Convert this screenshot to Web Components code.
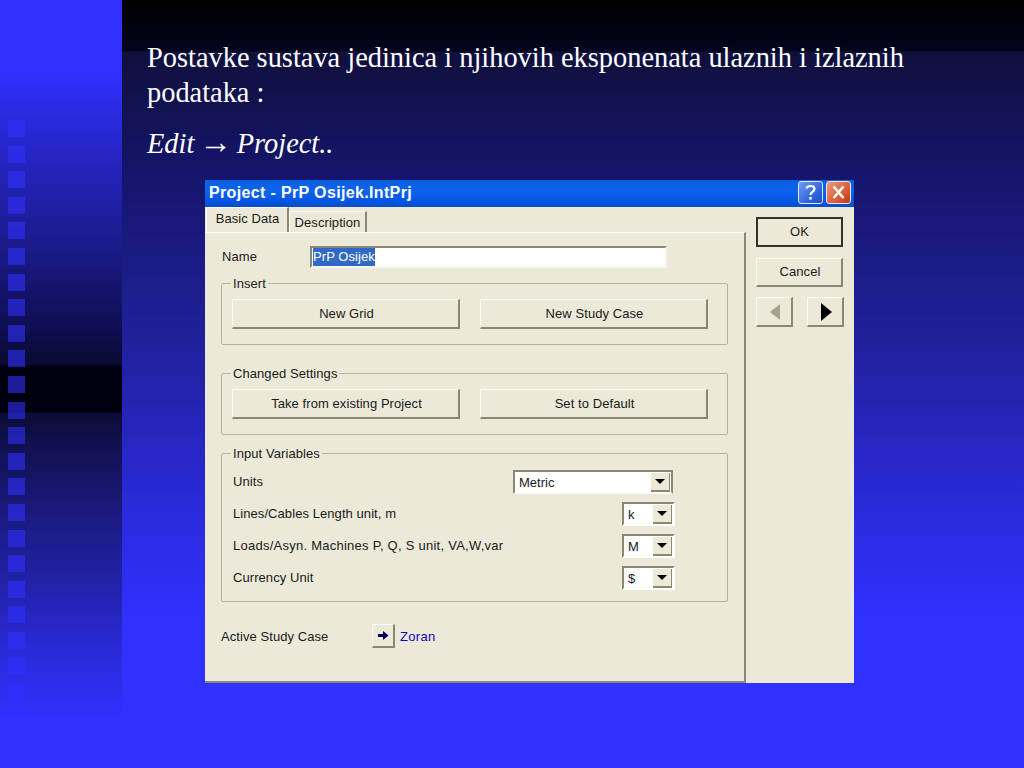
<!DOCTYPE html>
<html>
<head>
<meta charset="utf-8">
<title>Project</title>
<style>
html, body { margin: 0; padding: 0; height: 100%; }
body { width: 1024px; height: 768px; overflow: hidden; background: #3030ff; }
.edit { word-spacing: -2.4px; }
.arr { font-size: 33px; line-height: 0; }
</style>
</head>
<body>
<slide-page>
  <slide-text>
    <p>Postavke sustava jedinica i njihovih eksponenata ulaznih i izlaznih podataka :</p>
    <p class="it"><i class="edit">Edit <span class="arr">→</span> Project..</i></p>
  </slide-text>
  <project-dialog title-text="Project - PrP Osijek.IntPrj">
    <dlg-group legend="Insert" style="margin-top:15px">
      <div style="display:flex;gap:20px">
        <dlg-button style="width:228px;height:30px">New Grid</dlg-button>
        <dlg-button style="width:228px;height:30px">New Study Case</dlg-button>
      </div>
    </dlg-group>
    <dlg-group legend="Changed Settings" style="margin-top:28px">
      <div style="display:flex;gap:20px">
        <dlg-button style="width:228px;height:30px">Take from existing Project</dlg-button>
        <dlg-button style="width:228px;height:30px">Set to Default</dlg-button>
      </div>
    </dlg-group>
    <dlg-group legend="Input Variables" style="margin-top:18px" pad="16px 0 11px 10px">
      <unit-row label="Units" value="Metric" wide></unit-row>
      <unit-row label="Lines/Cables Length unit, m" value="k"></unit-row>
      <unit-row label="Loads/Asyn. Machines P, Q, S unit, VA,W,var" value="M" style="letter-spacing:.25px"></unit-row>
      <unit-row label="Currency Unit" value="$"></unit-row>
    </dlg-group>
  </project-dialog>
</slide-page>

<script>
    'use strict';

    const squareCount = 24;

    class SlidePage extends HTMLElement {
        constructor() {
            super();
            let squares = '';
            for (let i = 0; i < squareCount; i++) {
                squares += '<span></span>';
            }
            this.attachShadow({ mode: 'open' }).innerHTML = `<style>
                :host { display: grid; grid-template-columns: 122px 1fr; width: 1024px; height: 768px; overflow: hidden; }
                .side {
                    display: flex; flex-direction: column; gap: 8.6px; padding: 120px 0 0 8px; box-sizing: border-box; overflow: hidden;
                    background: linear-gradient(#3030ff 0, #3030ff 70px, #2626c8 150px, #1a1a88 250px, #0e0e50 330px, #0a0a30 365px, #000010 366px, #000010 412px, #0c0c38 413px, #171770 490px, #2020a0 570px, #2a2ad8 650px, #3030ff 720px);
                }
                .side span { flex: none; display: block; width: 17px; height: 17px; background: rgba(48, 48, 255, .58); }
                .main {
                    padding: 40px 0 0 25px; box-sizing: border-box; min-width: 0;
                    background: linear-gradient(#000 0, #03031e 51px, #10103c 52px, #15156a 170px, #20209c 340px, #2a2ad8 500px, #3030ff 620px);
                }
            </style>
            <div class="side">${squares}</div>
            <div class="main"><slot></slot></div>`;
        }
    }

    class SlideText extends HTMLElement {
        constructor() {
            super();
            this.attachShadow({ mode: 'open' }).innerHTML = `<style>
                :host { display: block; width: 790px; color: #fff; font: 28.4px/35px "Liberation Serif", "Times New Roman", serif; }
                ::slotted(p) { margin: 0 0 16px; }
                ::slotted(p.it) { margin: 0; }
            </style><slot></slot>`;
        }
    }

    class ProjectDialog extends HTMLElement {
        constructor() {
            super();
            const title = this.getAttribute('title-text');
            this.attachShadow({ mode: 'open' }).innerHTML = `<style>
                :host {
                    display: flex; flex-direction: column; width: 649px; height: 503px; margin: 19px 0 0 58px;
                    background: #ece9d8; color: #1a1a1a; font: 13px/16px "Liberation Sans", Arial, sans-serif; letter-spacing: .07px;
                }
                .bar {
                    flex: none; height: 27px; box-sizing: border-box; display: flex; align-items: center; padding: 0 3px 2px 4px; gap: 3px;
                    background: linear-gradient(#0a5fdc 0, #0a64ee 40%, #0453e0 85%, #0a4fc0 100%);
                    color: #fff; font: bold 16px "Liberation Sans", Arial, sans-serif; letter-spacing: .35px;
                }
                .bar .name { flex: 1; }
                .cap { flex: none; width: 25px; height: 23px; box-sizing: border-box; border: 1px solid #dfe8fb; border-radius: 3px; display: block; }
                .help { background: linear-gradient(135deg, #6f9bf0, #2c5fd8 70%, #2450c0); }
                .close { background: linear-gradient(135deg, #ee9a7c, #d8542a 70%, #c03c18); }
                .cols { flex: 1; display: flex; min-height: 0; }
                .left { width: 541px; flex: none; display: flex; flex-direction: column; }
                .tabs { flex: none; height: 25px; display: flex; align-items: flex-end; }
                .tab { box-sizing: border-box; border-right: 2px solid #8a8774; border-left: 1px solid #fff; border-top: 1px solid #fff; text-align: center; }
                .tab.on { width: 83px; height: 25px; line-height: 22px; padding-left: 1px; margin-left: 1px; }
                .tab.off { width: 78px; height: 21px; line-height: 21px; }
                .page {
                    flex: 1; box-sizing: border-box; border-top: 1px solid #fff; border-right: 2px solid #8a8774; border-bottom: 2px solid #8a8774;
                    padding: 13px 0 0 16px;
                }
                .nameRow { display: flex; height: 22px; align-items: center; }
                .nameRow label { width: 88px; padding-left: 1px; }
                .input {
                    width: 357px; height: 22px; box-sizing: border-box; background: #fff; display: block;
                    border: 2px solid #8a8774; border-right-color: #f6f5ee; border-bottom-color: #f6f5ee; padding-left: 1px; line-height: 18px;
                }
                .input b { font-weight: normal; background: #316ac5; color: #fff; display: inline-block; height: 18px; }
                .active { display: flex; align-items: center; margin-top: 22px; height: 24px; }
                .active label { width: 151px; padding-top: 2px; }
                .active a { color: #0a0ab4; margin-left: 5px; padding-top: 2px; letter-spacing: .3px; }
                .jump { width: 23px; height: 24px; padding: 0; }
                .right { flex: 1; display: flex; flex-direction: column; padding: 10px 0 0 10px; }
                .ok { width: 87px; height: 30px; }
                .cancel { width: 87px; height: 29px; margin-top: 11px; }
                .arrows { display: flex; gap: 14px; margin-top: 10px; }
                .arrows dlg-button { width: 37px; height: 30px; }
            </style>
            <div class="bar">
                <span class="name">${title}</span>
                <span class="cap help"><svg width="23" height="21" viewBox="0 0 23 21"><path d="M7.5 6.5C8 3.5 15 2.800 15.500 6.500C15.800 9.500 11.500 9.500 11.500 13" fill="none" stroke="#fff" stroke-width="2.200"/><rect x="10.300" y="15" width="2.400" height="2.600" fill="#fff"/></svg></span>
                <span class="cap close"><svg width="23" height="21" viewBox="0 0 23 21"><path d="M6.500 4.500L16.500 16M16.500 4.500L6.500 16" fill="none" stroke="#fff" stroke-width="2.600"/></svg></span>
            </div>
            <div class="cols">
                <div class="left">
                    <div class="tabs"><div class="tab on">Basic Data</div><div class="tab off">Description</div></div>
                    <div class="page">
                        <div class="nameRow"><label>Name</label><span class="input"><b>PrP Osijek</b></span></div>
                        <slot></slot>
                        <div class="active">
                            <label>Active Study Case</label>
                            <dlg-button class="jump"><svg width="11" height="9" viewBox="0 0 11 9" style="display:block"><path d="M0 3H5V0L10.500 4.500L5 9V6H0Z" fill="#00005a"/></svg></dlg-button>
                            <a>Zoran</a>
                        </div>
                    </div>
                </div>
                <div class="right">
                    <dlg-button class="ok" default>OK</dlg-button>
                    <dlg-button class="cancel">Cancel</dlg-button>
                    <div class="arrows">
                        <dlg-button><svg width="10" height="16" viewBox="0 0 10 16" style="display:block"><path d="M10 0V16L0 8Z" fill="#a4a396"/></svg></dlg-button>
                        <dlg-button><svg width="11" height="18" viewBox="0 0 11 18" style="display:block"><path d="M0 0V18L11 9Z" fill="#000"/></svg></dlg-button>
                    </div>
                </div>
            </div>`;
        }
    }

    class DlgGroup extends HTMLElement {
        constructor() {
            super();
            const pad = this.getAttribute('pad') || '15px 0 15px 10px';
            this.attachShadow({ mode: 'open' }).innerHTML = `<style>
                :host { display: block; position: relative; width: 507px; box-sizing: border-box; border: 1px solid #b5b3a4; border-radius: 2px; padding: ${pad}; }
                .legend { position: absolute; left: 9px; top: -8px; padding: 0 2px; background: #ece9d8; }
            </style><span class="legend">${this.getAttribute('legend')}</span><slot></slot>`;
        }
    }

    class DlgButton extends HTMLElement {
        constructor() {
            super();
            const border = this.hasAttribute('default')
                ? 'border: 2px solid #33322c;'
                : 'border: solid #fbfaf4; border-width: 1px 2px 2px 1px; border-right-color: #8a8774; border-bottom-color: #8a8774; padding-left: 2px;';
            this.attachShadow({ mode: 'open' }).innerHTML = `<style>
                :host { display: flex; align-items: center; justify-content: center; box-sizing: border-box; flex: none; background: #ece9d8; ${border} }
            </style><slot></slot>`;
        }
    }

    class UnitRow extends HTMLElement {
        constructor() {
            super();
            const wide = this.hasAttribute('wide');
            this.attachShadow({ mode: 'open' }).innerHTML = `<style>
                :host { display: grid; grid-template-columns: 281px 162px; height: 24px; margin-bottom: 8px; align-items: center; }
                :host(:last-child) { margin-bottom: 0; }
                .label { padding-left: 1px; }
                .combo {
                    height: 24px; box-sizing: border-box; display: flex; align-items: center; justify-content: space-between; background: #fff;
                    border: 2px solid #fff; border-top-color: #8a8774; border-left-color: #8a8774; padding-left: 4px; letter-spacing: 0;
                    width: ${wide ? 160 : 53}px; justify-self: ${wide ? 'start' : 'end'};
                    ${wide ? 'border-right-color: #8a8774; border-bottom-color: #fbfaf4;' : ''}
                }
                .combo .val { padding-top: 1px; }
                .drop {
                    width: 19px; height: 19px; box-sizing: border-box; background: #ece9d8; display: flex; align-items: center; justify-content: center;
                    border-bottom: 2px solid #8a8774; border-right: 1px solid #8a8774; margin-right: 1px;
                }
                .drop i { width: 0; height: 0; border: 5px solid transparent; border-top: 5px solid #000; border-bottom: 0; }
            </style>
            <span class="label">${this.getAttribute('label')}</span>
            <div class="combo"><span class="val">${this.getAttribute('value')}</span><span class="drop"><i></i></span></div>`;
        }
    }

    // children first, so that the dialog's own dlg-button upgrade when its shadow is built
    customElements.define('dlg-button', DlgButton);
    customElements.define('dlg-group', DlgGroup);
    customElements.define('unit-row', UnitRow);
    customElements.define('slide-text', SlideText);
    customElements.define('project-dialog', ProjectDialog);
    customElements.define('slide-page', SlidePage);
</script>
</body>
</html>
